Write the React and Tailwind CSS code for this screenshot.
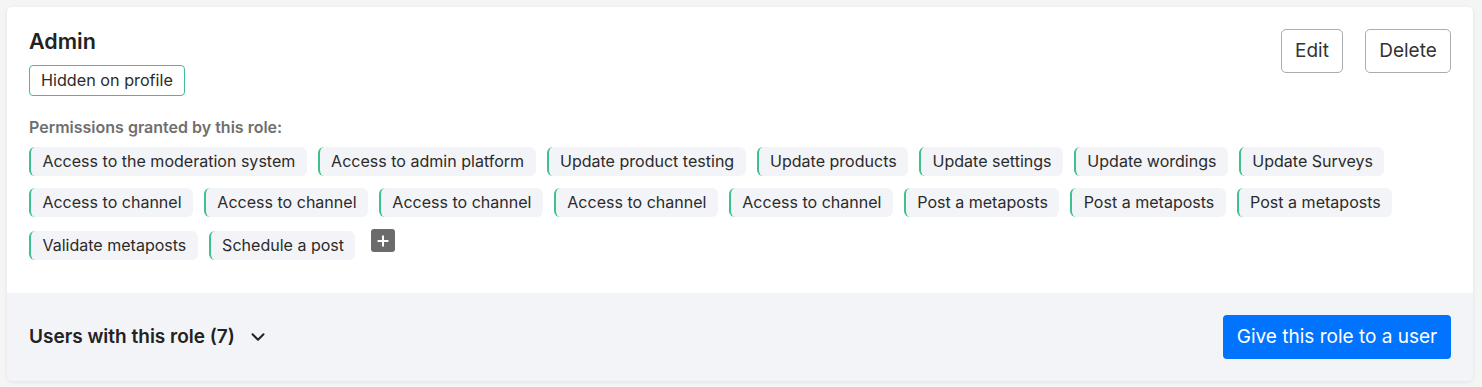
import { ChevronDown, Plus } from 'lucide-react';

const permissions = [
    'Access to the moderation system',
    'Access to admin platform',
    'Update product testing',
    'Update products',
    'Update settings',
    'Update wordings',
    'Update Surveys',
    'Access to channel',
    'Access to channel',
    'Access to channel',
    'Access to channel',
    'Access to channel',
    'Post a metaposts',
    'Post a metaposts',
    'Post a metaposts',
    'Validate metaposts',
    'Schedule a post',
];

const PermissionChip = ({ label }) => (
    <span className="h-[29px] flex items-center px-[11.4px] bg-[#f3f4f7] border-l-2 border-[#3ec08f] rounded-[6px] text-[16.05px] text-[#2b2b2b] leading-none">
        {label}
    </span>
);

export default function App() {
    return (
        <div className="min-h-[387px] bg-[#f5f5f5] pt-[7px] pl-[7px]" style={{ fontFamily: 'Inter, "Noto Sans", sans-serif' }}>
            <div className="w-[1466px] bg-white rounded-[5px] shadow-[0_1px_4px_rgba(0,0,0,0.08)] overflow-hidden">
                <div className="px-[22px] pt-[22px] pb-[31px]">
                    <div className="flex justify-between items-start">
                        <div>
                            <h2 className="text-[21.5px] font-semibold text-[#222] leading-[24px]">Admin</h2>
                            <span className="mt-[12px] inline-flex items-center h-[31px] px-[11px] border border-[#3ec08f] rounded-[4px] text-[16.2px] text-[#2b2b2b]">
                                Hidden on profile
                            </span>
                        </div>
                        <div className="flex gap-[22px]">
                            <button className="h-[44px] w-[62px] border border-[#acacac] rounded-[5px] text-[19px] text-[#333]">Edit</button>
                            <button className="h-[44px] w-[86px] border border-[#acacac] rounded-[5px] text-[19px] text-[#333]">Delete</button>
                        </div>
                    </div>

                    <p className="mt-[22px] text-[16px] font-semibold text-[#6f6f6f] leading-[18px]">Permissions granted by this role:</p>
                    <div className="mt-[11px] flex flex-wrap items-center gap-x-[11px] gap-y-[12px] w-[1380px]">
                        {permissions.map((p, i) => (
                            <PermissionChip key={i} label={p} />
                        ))}
                        <button className="ml-[5px] self-start mb-[10px] w-[24px] h-[23px] bg-[#6b6b6b] rounded-[3px] flex items-center justify-center text-white">
                            <Plus size={16} strokeWidth={3} />
                        </button>
                    </div>
                </div>

                <div className="h-[88px] bg-[#f3f4f8] px-[22px] flex items-center justify-between">
                    <div className="flex items-center gap-[12px]">
                        <span className="text-[19px] font-semibold text-[#222]">Users with this role (7)</span>
                        <ChevronDown size={22} strokeWidth={2.2} className="text-[#222]" />
                    </div>
                    <button className="h-[44px] w-[228px] bg-[#0074ff] rounded-[4px] text-white text-[19px]">
                        Give this role to a user
                    </button>
                </div>
            </div>
        </div>
    );
}
